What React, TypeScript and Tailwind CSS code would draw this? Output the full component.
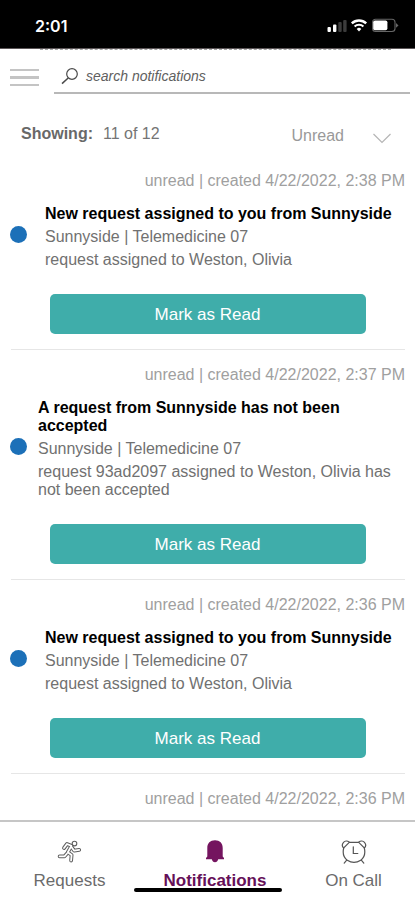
import type { FC } from "react";

type Notification = {
  time: string;
  title: string;
  place: string;
  text: string;
  wide?: boolean;
};

const notifications: Notification[] = [
  {
    time: "4/22/2022, 2:38 PM",
    title: "New request assigned to you from Sunnyside",
    place: "Sunnyside | Telemedicine 07",
    text: "request assigned to Weston, Olivia",
  },
  {
    time: "4/22/2022, 2:37 PM",
    title: "A request from Sunnyside has not been accepted",
    place: "Sunnyside | Telemedicine 07",
    text: "request 93ad2097 assigned to Weston, Olivia has not been accepted",
    wide: true,
  },
  {
    time: "4/22/2022, 2:36 PM",
    title: "New request assigned to you from Sunnyside",
    place: "Sunnyside | Telemedicine 07",
    text: "request assigned to Weston, Olivia",
  },
];

const StatusBar: FC = () => (
  <div className="flex h-12 shrink-0 items-start justify-between bg-black pl-[35px] pr-[16px] pt-[16px]">
    <span className="font-['Inter',sans-serif] text-[16px] font-semibold leading-[20px] text-white">
      2:01
    </span>
    <svg width="73" height="18" viewBox="326 16 73 18" fill="none">
      <rect x="327.5" y="27" width="3.4" height="5" rx="1" fill="#fff" />
      <rect x="333" y="24.5" width="3.4" height="7.5" rx="1" fill="#fff" />
      <rect x="338.3" y="22" width="3.4" height="10" rx="1" fill="#3c3c3c" />
      <rect x="343.2" y="20" width="3.4" height="12" rx="1" fill="#3c3c3c" />
      <path d="M351.8 23.4a10.3 10.3 0 0 1 14.4 0" stroke="#fff" strokeWidth="2.4" />
      <path d="M354.6 26.5a6.3 6.3 0 0 1 8.8 0" stroke="#fff" strokeWidth="2.1" />
      <path d="M359 31.4l-2.3-2.5a3.4 3.4 0 0 1 4.6 0z" fill="#fff" />
      <rect x="372.6" y="19.3" width="22.4" height="12.2" rx="3" stroke="#666" strokeWidth="1.1" />
      <rect x="373.2" y="20.5" width="14.2" height="9.8" rx="1.8" fill="#fff" />
      <path d="M396 23l2.500 2.400-2.500 2.400z" fill="#666" />
    </svg>
  </div>
);

const Header: FC = () => (
  <div className="flex h-[45px] shrink-0 items-end pl-[10px] pr-[5px]">
    <div className="flex w-[44px] flex-col gap-[5px] pb-[8px]">
      <div className="h-[2.5px] w-[29px] bg-[#c4c4c4]" />
      <div className="h-[2.5px] w-[29px] bg-[#c4c4c4]" />
      <div className="h-[2.5px] w-[29px] bg-[#c4c4c4]" />
    </div>
    <div className="flex h-[34px] flex-1 items-center border-b-2 border-[#b8b8b8] pl-[7px]">
      <svg width="19" height="18" viewBox="0 0 19 18" fill="none" stroke="#4a4a4a">
        <circle cx="11" cy="7" r="5.3" strokeWidth="1.2" />
        <path d="M7.2 11L1 16.6" strokeWidth="1.5" />
      </svg>
      <span className="ml-[6px] text-[14px] italic leading-[18px] text-[#606060]">
        search notifications
      </span>
    </div>
  </div>
);

const Created: FC<{ time: string }> = ({ time }) => (
  <div className="pr-[10px] text-right text-[#a0a0a0]">unread | created {time}</div>
);

const Item: FC<{ item: Notification }> = ({ item }) => (
  <div className="shrink-0 pt-4">
    <Created time={item.time} />
    <div className="mt-[15px] flex items-center pl-[10px]">
      <div className="mb-[6px] size-[17px] shrink-0 rounded-full bg-[#1c70b8]" />
      <div
        className={
          item.wide
            ? "ml-[11px] flex w-[364px] flex-col gap-[5px] text-[#717171]"
            : "ml-[18px] flex w-[360px] flex-col gap-[5px] text-[#717171]"
        }
      >
        <div className="pr-[10px] font-bold text-black">{item.title}</div>
        <div>{item.place}</div>
        <div>{item.text}</div>
      </div>
    </div>
    <button className="ml-[50px] mt-[25px] block h-10 w-[316px] rounded-[5px] bg-[#3fadaa] pr-px pt-[2px] text-[17px] leading-[20px] text-white">
      Mark as Read
    </button>
    <div className="ml-[11px] mr-[10px] mt-[15px] h-px bg-[#e6e6e6]" />
  </div>
);

const RunnerIcon: FC = () => (
  <svg width="25" height="24" viewBox="0 0 25 24" fill="none" strokeLinecap="round" strokeLinejoin="round">
    <g stroke="#5f5f5f" strokeWidth="3.8">
      <path d="M7 8l3-4 4.5 1.8-3.7 6.4 3.8 2.8-.5 5.5" />
      <path d="M10 13.5L7.5 16.3H2.6" />
      <path d="M14.6 7.2l2.6 3.5 5-.9" />
    </g>
    <g stroke="#fff" strokeWidth="1.8">
      <path d="M7 8l3-4 4.5 1.8-3.7 6.4 3.8 2.8-.5 5.5" />
      <path d="M10 13.5L7.5 16.3H2.6" />
      <path d="M14.6 7.2l2.6 3.5 5-.9" />
    </g>
    <circle cx="17.5" cy="3.6" r="2.3" fill="#fff" stroke="#5f5f5f" strokeWidth="1.1" />
  </svg>
);

const BellIcon: FC = () => (
  <svg width="20" height="24" viewBox="0 0 20 24" fill="#74145f">
    <path d="M10 .3c4.800 0 7.700 3 7.700 7.600v8.600l1.300 1.500v1.300h-5.800c-.5 1.800-1.600 2.900-3.200 2.900s-2.700-1.100-3.200-2.900H1V18l1.300-1.500V7.900C2.300 3.300 5.200.3 10 .3z" />
  </svg>
);

const AlarmIcon: FC = () => (
  <svg width="26" height="24" viewBox="0 0 26 24" fill="none" stroke="#555" strokeWidth="1.2" strokeLinecap="round">
    <path d="M8.300 2.300h9.400M2.700 8c-1.200 5-.7 9 3.600 12.200 4 2.500 9.400 2.500 13.400 0C24 17 24.500 13 23.300 8" />
    <path d="M2.700 8C-.9 4.600 4-1.700 8.300 2.300zM23.300 8c3.600-3.400-1.300-9.700-5.600-5.700z" />
    <path d="M5.700 20.200l-2.500 2.900M20.300 20.200l2.500 2.900" />
    <path d="M12.300 6.800v6.700h4.500" />
  </svg>
);

const TabBar: FC = () => (
  <div className="relative grid h-20 shrink-0 grid-cols-[139px_153px_123px] border-t-2 border-[#c6c6c6] bg-white pt-[18px] text-[17px] leading-[20px] text-[#6b6b6b]">
    <div className="flex flex-col items-center gap-[7px]">
      <RunnerIcon />
      Requests
    </div>
    <div className="flex flex-col items-center gap-[7px] pr-px font-bold text-[#651058]">
      <BellIcon />
      Notifications
    </div>
    <div className="flex flex-col items-center gap-[7px]">
      <AlarmIcon />
      On Call
    </div>
    <div className="absolute left-[134px] top-[66px] h-[4px] w-[148px] rounded-full bg-black" />
  </div>
);

export default function App() {
  return (
    <div className="flex h-[900px] w-[415px] flex-col overflow-hidden bg-white font-['Liberation_Sans',Arial,sans-serif] text-[16px] leading-[18px]">
      <StatusBar />
      <div className="h-px shrink-0 bg-[#5c5658]" />
      <div className="-mb-px ml-[40px] mr-[24px] shrink-0 border-t border-dashed border-[#a9a9a9]" />
      <Header />
      <div className="flex h-[62px] shrink-0 items-start pl-[21px] pr-[24px] pt-[31px] text-[#757575]">
        <span className="font-bold text-[#686868]">Showing:</span>
        <span className="ml-[10px]">11 of 12</span>
        <span className="ml-auto mt-[2px] text-[#999]">Unread</span>
        <svg className="ml-[29px] mt-[8px]" width="18" height="11" viewBox="0 0 18 11" fill="none" stroke="#b5b5b5" strokeWidth="1.2">
          <path d="M.5 1l8.500 8.500L17.500 1" />
        </svg>
      </div>
      <div className="flex min-h-0 flex-1 flex-col overflow-hidden">
        {notifications.map((item) => (
          <Item key={item.time} item={item} />
        ))}
        <div className="pt-4">
          <Created time="4/22/2022, 2:36 PM" />
        </div>
      </div>
      <TabBar />
    </div>
  );
}
